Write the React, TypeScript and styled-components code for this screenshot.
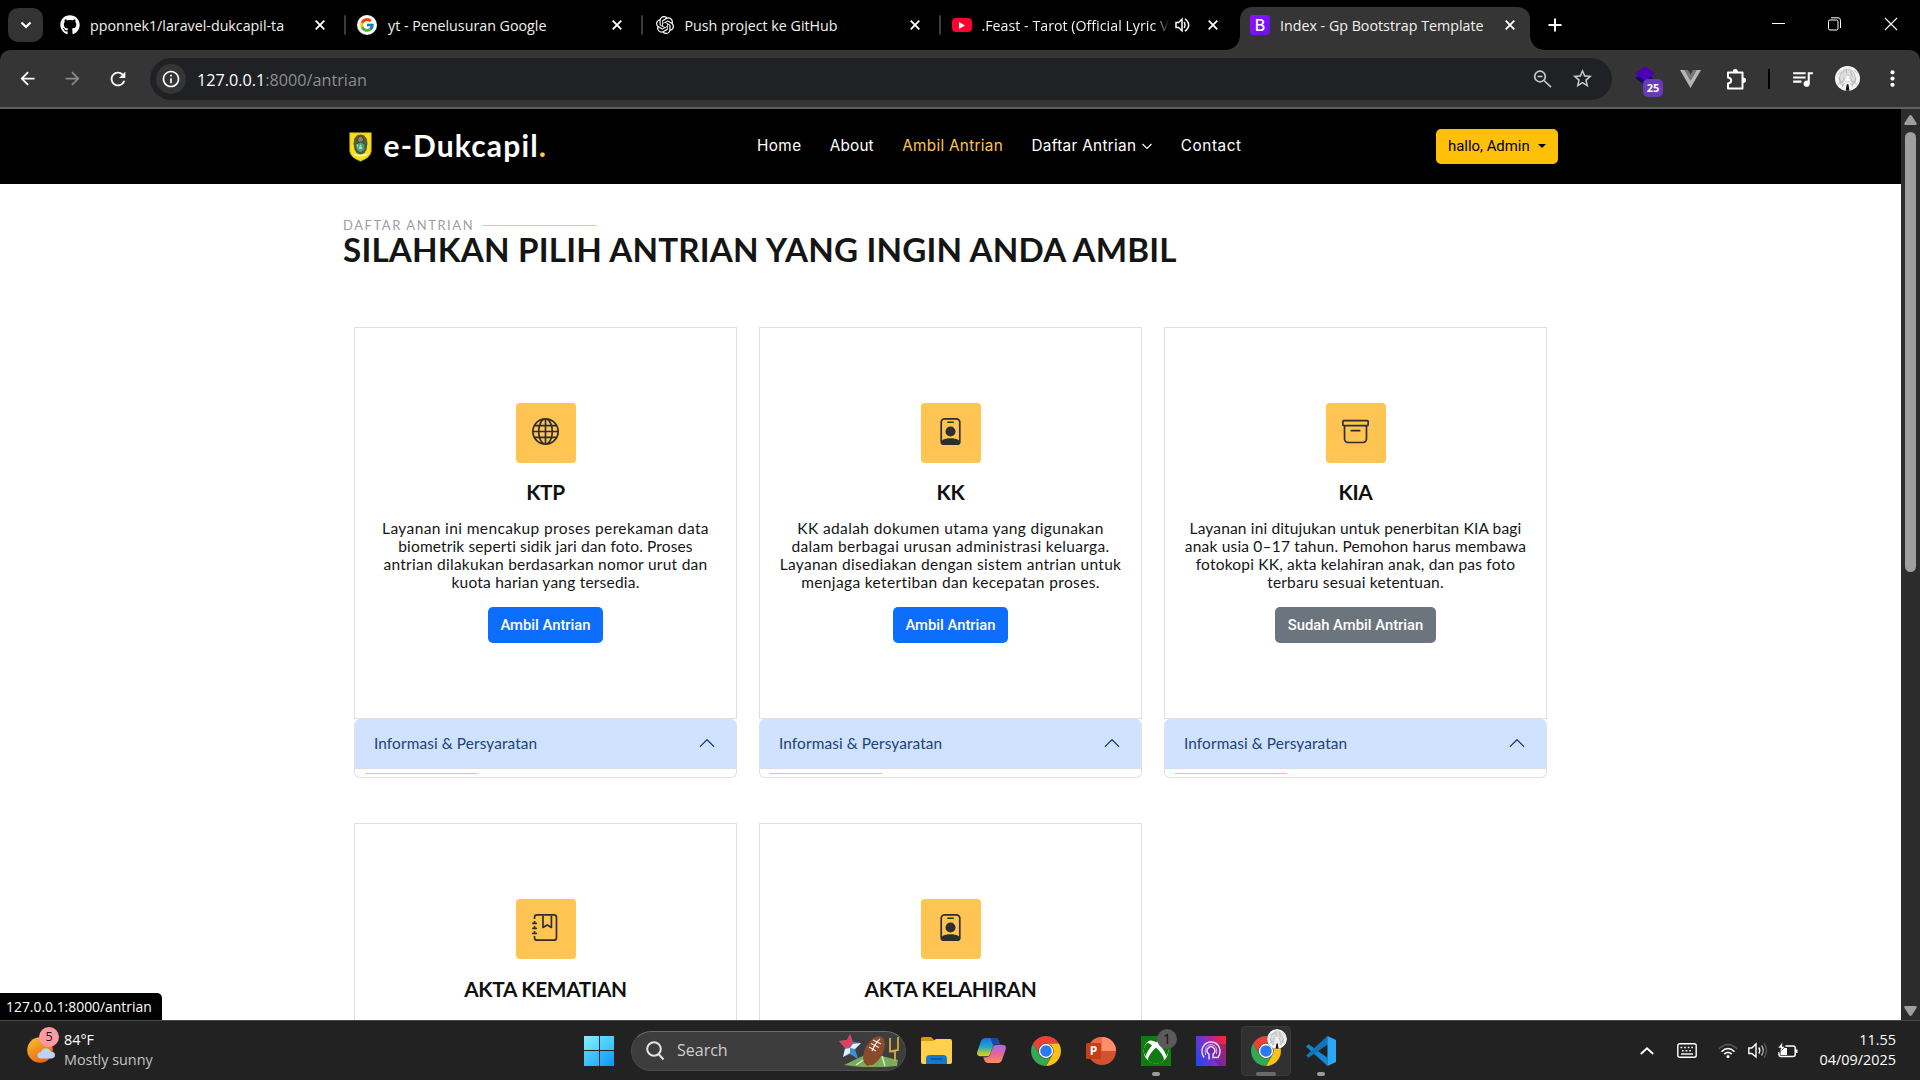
import React from "react";
import styled, { createGlobalStyle, css } from "styled-components";
import { BsGlobe, BsPersonBadge, BsArchive, BsJournalBookmark, BsChevronUp } from "react-icons/bs";
import { FaGithub } from "react-icons/fa";
import { FcGoogle } from "react-icons/fc";
import { SiOpenai } from "react-icons/si";
import { MdArrowBack, MdArrowForward, MdRefresh, MdInfoOutline, MdStarBorder, MdMoreVert, MdQueueMusic } from "react-icons/md";

const ui = `"Open Sans", "Noto Sans", sans-serif`;
const display = `Lato, "Open Sans", sans-serif`;

const GlobalStyle = createGlobalStyle`
  * { box-sizing: border-box; }
  body { margin: 0; background: #000; overflow: hidden; font-family: ${ui}; }
  svg { display: block; flex: none; }
`;

const Screen = styled.div`
  width: 1920px;
  height: 1080px;
  display: flex;
  flex-direction: column;
  overflow: hidden;
`;

/* ---------- tab strip ---------- */
const TabStrip = styled.div`
  height: 50px;
  background: #000;
  display: flex;
  padding-left: 8px;
  color: #fff;
`;
const TabSearch = styled.div`
  width: 35px;
  height: 34px;
  margin-top: 8px;
  border-radius: 10px;
  background: #333;
  display: grid;
  place-items: center;
`;
const Tab = styled.div<{ $active?: boolean; $width: number; $start: number; $end: number }>`
  position: relative;
  width: ${(p) => p.$width}px;
  height: ${(p) => (p.$active ? 43 : 36)}px;
  margin-top: 7px;
  display: flex;
  align-items: center;
  padding: 0 ${(p) => p.$end}px 0 ${(p) => p.$start}px;
  ${(p) =>
    p.$active &&
    css`
      background: #353535;
      border-radius: 12px 12px 0 0;
      padding-bottom: 7px;
      &::before, &::after {
        content: "";
        position: absolute;
        bottom: 0;
        width: 14px;
        height: 14px;
      }
      &::before { left: -14px; background: radial-gradient(circle at 0 0, transparent 13.5px, #353535 14px); }
      &::after { right: -14px; background: radial-gradient(circle at 100% 0, transparent 13.5px, #353535 14px); }
    `}
`;
const TabIcon = styled.span`
  width: 20px;
  display: grid;
  place-items: center;
`;
const TabTitle = styled.span<{ $gap: number; $fade?: boolean }>`
  margin-left: ${(p) => p.$gap}px;
  padding-top: 1px;
  flex: 1;
  min-width: 0;
  white-space: nowrap;
  font-size: 14.25px;
  line-height: 24px;
  color: #f1f1f1;
  ${(p) => p.$fade && css`mask-image: linear-gradient(90deg, #000 172px, transparent 188px);`}
`;
const SoundSlot = styled.span`
  margin-right: 18px;
  display: flex;
`;
const TabDivider = styled.i`
  width: 2px;
  height: 20px;
  margin-top: 15px;
  border-radius: 1px;
  background: #3a3a3a;
`;
const NewTab = styled.div`
  margin: 18px 0 0 18px;
`;
const WindowButtons = styled.div`
  margin: 17px 22px 0 auto;
  display: flex;
  gap: 43px;
`;
const YoutubeMark = styled.span`
  width: 20px;
  height: 14px;
  border-radius: 4px;
  background: #ff0033;
  display: grid;
  place-items: center;
`;
const BootstrapMark = styled.span`
  width: 20px;
  height: 20px;
  border-radius: 3px;
  background: linear-gradient(135deg, #9013fe, #6610f2);
  color: #fff;
  font: 500 16px/20px Inter, sans-serif;
  text-align: center;
`;

/* ---------- toolbar ---------- */
const ToolbarWrap = styled.div`
  background: linear-gradient(#000 20px, #353535 20px);
`;
const Toolbar = styled.div`
  height: 59px;
  background: #353535;
  border-bottom: 2px solid #606060;
  border-radius: 10px 10px 0 0;
  display: flex;
  align-items: center;
  padding-left: 17px;
  color: #fff;
`;
const NavIcons = styled.div`
  width: 133px;
  display: flex;
  gap: 24px;
  svg:nth-child(2) { color: #8a8a8a; }
`;
const Omnibox = styled.div`
  width: 1462px;
  height: 42px;
  border-radius: 21px;
  background: #202124;
  display: flex;
  align-items: center;
  padding: 0 18px 0 6px;
`;
const SiteInfo = styled.span`
  width: 30px;
  height: 30px;
  border-radius: 50%;
  background: #353535;
  display: grid;
  place-items: center;
`;
const Url = styled.span`
  margin-left: 11px;
  padding-top: 2px;
  font-size: 16.2px;
  color: #8d8e90;
  flex: 1;
  b { font-weight: 400; color: #fff; }
`;
const OmniIcons = styled.span`
  display: flex;
  align-items: center;
  gap: 19px;
  color: #c8c8c8;
`;
const Extensions = styled.div`
  flex: 1;
  height: 57px;
  display: flex;
  align-items: center;
  padding-left: 23px;
`;
const LayersExtension = styled.div`
  position: relative;
  width: 28px;
  height: 30px;
`;
const CountBadge = styled.span`
  position: absolute;
  left: 8px;
  top: 15px;
  width: 20px;
  height: 18px;
  border-radius: 5px;
  background: #673ab7;
  color: #fff;
  font: 700 11px/18px "Open Sans", sans-serif;
  text-align: center;
`;
const Slot = styled.span<{ $left: number }>`
  margin-left: ${(p) => p.$left}px;
  display: flex;
`;
const ToolDivider = styled.i`
  margin-left: 21px;
  width: 2px;
  height: 20px;
  background: #000;
`;

/* ---------- page ---------- */
const Viewport = styled.div`
  height: 911px;
  display: flex;
  position: relative;
  background: #fff;
`;
const Page = styled.div`
  width: 1901px;
  height: 911px;
  overflow: hidden;
`;
const Header = styled.header`
  height: 75px;
  background: #000;
  display: flex;
  align-items: center;
  padding-left: 348.5px;
`;
const Brand = styled.div`
  width: 408.5px;
  display: flex;
  align-items: center;
  gap: 12px;
  color: #fff;
  font: 700 30px/36px ${display};
  letter-spacing: 1.15px;
  span { padding-bottom: 3px; }
  i { font-style: normal; color: #ffc451; }
`;
const Menu = styled.nav`
  width: 679px;
  display: flex;
  gap: 28.4px;
  padding-bottom: 1px;
`;
const MenuItem = styled.a<{ $active?: boolean; $track: number }>`
  display: flex;
  align-items: center;
  gap: 6px;
  white-space: nowrap;
  font: 400 15.3px/24px Inter, sans-serif;
  letter-spacing: ${(p) => p.$track}px;
  color: ${(p) => (p.$active ? "#ffc451" : "#fff")};
`;
const UserButton = styled.button`
  width: 122px;
  height: 35px;
  border: 0;
  border-radius: 5px;
  background: #ffc107;
  padding: 0 0 1px 12px;
  display: flex;
  align-items: center;
  gap: 8px;
  font: 400 14.9px/22px Roboto, sans-serif;
  color: #000;
`;
const Caret = styled.i`
  border: 4px solid transparent;
  border-top-color: #000;
  border-bottom: 0;
`;
const Heading = styled.section`
  padding: 34px 0 0 343px;
`;
const Eyebrow = styled.div`
  height: 15px;
  display: flex;
  align-items: center;
  gap: 9px;
  font: 400 13px/15px ${display};
  letter-spacing: 1.56px;
  color: #a0a0a0;
  &::after { content: ""; width: 113px; height: 1px; background: #ffc451; }
`;
const Title = styled.h1`
  margin: -2px 0 2px;
  font: 700 33.2px/36px ${display};
  letter-spacing: 0.19px;
  color: #151515;
`;
const CardGrid = styled.section`
  display: grid;
  grid-template-columns: repeat(3, 383px);
  column-gap: 22px;
  row-gap: 45.4px;
  padding: 58px 0 0 354px;
`;
const ServiceCard = styled.article`
  height: 392px;
  border: 1px solid #e0e0e1;
  display: flex;
  flex-direction: column;
  align-items: center;
  padding-top: 75px;
`;
const IconTile = styled.div`
  width: 60px;
  height: 60px;
  border-radius: 4px;
  background: #ffc451;
  color: #2e2e2e;
  display: flex;
  justify-content: center;
  padding-top: 15px;
`;
const CardTitle = styled.h2`
  margin: 15.2px 0 0;
  height: 28px;
  font: 700 20.8px/28px ${display};
  letter-spacing: -0.3px;
  color: #111;
`;
const CardText = styled.p`
  margin: 12.8px 0 0;
  text-align: center;
  font: 400 15.5px/18px ${display};
  color: #151515;
`;
const Line = styled.span<{ $track: number }>`
  display: block;
  white-space: nowrap;
  letter-spacing: ${(p) => p.$track}px;
`;
const CardButton = styled.button<{ $done?: boolean }>`
  margin-top: 16px;
  width: ${(p) => (p.$done ? 161 : 115)}px;
  height: 36px;
  border: 0;
  border-radius: 5px;
  padding: 0;
  background: ${(p) => (p.$done ? "#6c757d" : "#0d6efd")};
  color: #fff;
  font: 500 14.8px/22px Roboto, sans-serif;
`;
const Accordion = styled.div`
  height: 59px;
  border: 1px solid #dee2e6;
  border-top: 0;
  border-radius: 6px;
  overflow: hidden;
`;
const AccordionHead = styled.div`
  height: 50px;
  background: #cfe2ff;
  border-bottom: 1px solid #d5dfea;
  color: #052c65;
  padding: 0 20px 1px 19px;
  display: flex;
  align-items: center;
  justify-content: space-between;
  font: 400 15.4px/20px ${display};
  letter-spacing: 0.1px;
  span { color: #1e4273; }
`;
const AccentRule = styled.div`
  width: 112px;
  height: 1px;
  margin: 4px 0 0 10px;
  background: #ffc451;
`;
const Scrollbar = styled.div`
  width: 19px;
  background: #2c2c2c;
  display: flex;
  flex-direction: column;
  align-items: center;
  padding: 6px 0 4px;
`;
const ScrollThumb = styled.div`
  width: 11px;
  height: 440px;
  margin: 7px 0 auto;
  border-radius: 6px;
  background: #9f9f9f;
`;
const StatusBubble = styled.div`
  position: absolute;
  left: 0;
  bottom: 0;
  width: 162px;
  height: 27px;
  border-radius: 0 5px 0 0;
  background: #000;
  color: #fff;
  padding-left: 6px;
  font: 400 13.9px/27px ${ui};
`;

/* ---------- taskbar ---------- */
const Taskbar = styled.footer`
  height: 60px;
  background: #222;
  border-top: 1px solid #484848;
  display: flex;
  align-items: center;
  color: #fff;
`;
const Weather = styled.div`
  width: 584px;
  padding-left: 27px;
  display: flex;
  align-items: center;
`;
const WeatherIcon = styled.div`
  position: relative;
  width: 37px;
  height: 44px;
  padding-top: 8px;
`;
const WeatherCount = styled.span`
  position: absolute;
  left: 12px;
  top: -2px;
  width: 20px;
  height: 20px;
  border-radius: 50%;
  background: #ff99a4;
  color: #111;
  font: 400 12.5px/20px ${ui};
  text-align: center;
`;
const TwoLines = styled.div<{ $right?: boolean }>`
  font-size: 14.4px;
  line-height: 20px;
  padding-bottom: 2px;
  white-space: nowrap;
  text-align: ${(p) => (p.$right ? "right" : "left")};
  small { display: block; font-size: inherit; color: ${(p) => (p.$right ? "#fff" : "#c4c4c4")}; }
`;
const StartLogo = styled.div`
  width: 30px;
  height: 30px;
  display: grid;
  grid-template-columns: 1fr 1fr;
  gap: 1px;
  i:nth-child(1) { background: linear-gradient(135deg, #7ff0fd, #55d2fb); }
  i:nth-child(2) { background: linear-gradient(135deg, #5fdcfc, #37bffa); }
  i:nth-child(3) { background: linear-gradient(135deg, #4fd0fb, #29b0fa); }
  i:nth-child(4) { background: linear-gradient(135deg, #35b9fa, #0f97fb); }
`;
const SearchBox = styled.div`
  margin-left: 17px;
  width: 275px;
  height: 40px;
  border-radius: 20px;
  background: #3d3d3d;
  border: 1px solid #4b4b4b;
  border-top-color: #6a6a6a;
  display: flex;
  align-items: center;
  padding: 0 5px 0 13px;
  font-size: 16px;
  color: #cfcfcf;
  span { flex: 1; margin-left: 12px; padding-bottom: 1px; }
`;
const Apps = styled.div`
  margin-left: 5px;
  display: flex;
  gap: 5px;
`;
const AppSlot = styled.div<{ $active?: boolean; $running?: boolean }>`
  position: relative;
  width: 50px;
  height: 50px;
  border-radius: 5px;
  display: grid;
  place-items: center;
  ${(p) => p.$active && css`background: #303030; box-shadow: inset 0 0 0 1px #3b3b3b;`}
  ${(p) =>
    (p.$active || p.$running) &&
    css`
      &::after {
        content: "";
        position: absolute;
        bottom: 0;
        left: 50%;
        width: ${p.$active ? 20 : 8}px;
        height: 4px;
        border-radius: 2px;
        background: ${p.$active ? "#6a6a6a" : "#9a9a9a"};
        transform: translateX(-50%);
      }
    `}
`;
const AppBadge = styled.span`
  position: absolute;
  right: 4px;
  top: 3px;
  width: 20px;
  height: 20px;
  border-radius: 50%;
  overflow: hidden;
  background: #5a5a5a;
  color: #111;
  font: 400 14px/20px ${ui};
  text-align: center;
`;
const Tray = styled.div`
  margin-left: auto;
  padding-right: 24px;
  display: flex;
  align-items: center;
`;
const Clock = styled.div`
  width: 97px;
`;

const Cross = ({ size = 10, w = 1.8 }: { size?: number; w?: number }) => (
  <svg width={size} height={size} viewBox="0 0 10 10" stroke="#fff" strokeWidth={w} fill="none">
    <path d="M.7.7l8.6 8.6M9.3.7L.7 9.3" />
  </svg>
);

const Chrome = () => (
  <svg width="30" height="30" viewBox="2 2 44 44">
    <path fill="#ea4335" d="M24 13H43.05A22 22 0 0 0 4.95 13L14.47 29.5A11 11 0 0 1 24 13Z" />
    <path fill="#fbc116" d="M43.05 13A22 22 0 0 1 24 46L33.53 29.5A11 11 0 0 0 24 13Z" />
    <path fill="#34a853" d="M24 46A22 22 0 0 1 4.95 13L14.47 29.5A11 11 0 0 0 33.53 29.5Z" />
    <circle cx="24" cy="24" r="10.5" fill="#fff" />
    <circle cx="24" cy="24" r="8.5" fill="#2979f2" />
  </svg>
);

const Avatar = ({ size }: { size: number }) => (
  <svg width={size} height={size} viewBox="0 0 26 26">
    <circle cx="13" cy="13" r="13" fill="#f4f4f4" />
    <path d="M5 17q-1-9 3-12 5-4 10 0 4 4 3 12l-3 3-1-7-4-3-4 3-1 8z" fill="#dedede" stroke="#9a9a9a" strokeWidth=".5" />
    <path d="M9.500 11q3.500-3 7 0l-.6 4.500q-2.900 3-5.800 0z" fill="#fafafa" stroke="#888" strokeWidth=".4" />
    <path d="M7 8l4-4M12 4v4M16 5l2 6M3 19l5-3M23 19l-5-3M4 12l2 5M22 12l-2 5M10.500 12.500h1.500M14 12.500h1.500M7 22l3-4M19 22l-3-4M3 9l3-3M20 4l3 4" stroke="#8c8c8c" strokeWidth=".5" fill="none" />
    <path d="M12.200 19h1.800l1 6.800h-3.800z" fill="#111" />
  </svg>
);

const Crest = () => (
  <svg width="23" height="30" viewBox="0 0 23 30">
    <path d="M.7.7h21.6V19q-.6 6.5-10.8 10.3Q1.300 25.500.7 19Z" fill="#f8df1b" stroke="#a59724" strokeWidth=".7" />
    <path d="M11.500 2.500l3.500.8 2.700 3.200.8 5-1 6-2 3.500-4 2-4-2-2-3.500-1-6 .8-5L8 3.300Z" fill="#565f38" />
    <path d="M8.300 8l1-3 2.200-1 2.200 1 1 3-1.500 2.500h-3.400Z" fill="#8a8352" stroke="#2d3527" strokeWidth=".8" />
    <path d="M7 12l4.500-2 4.500 2v6l-4.500 3L7 18Z" fill="#4a9e91" stroke="#2b4538" strokeWidth=".8" />
    <path d="M9.500 17l2-5 2 5ZM7.500 12l2 1-1.500 3Z" fill="#c5d982" />
    <path d="M5 22.500q6.500 2 13 0" stroke="#f7f3da" strokeWidth="1.800" fill="none" />
  </svg>
);

const Football = () => (
  <svg width="61" height="33" viewBox="0 0 61 33">
    <path d="M5 31L30 19l29 7-1 6q-28 3-53-1Z" fill="#79ad5c" />
    <path d="M17 31l13-9M31 32l5-11M46 32l-3-10" stroke="#d7e8c5" strokeWidth="1.500" />
    <path d="M11 0l3 8 8 1-6 6 3 10-8-5-7 3 2-9-6-7 8-1Z" fill="#3f8fd2" />
    <path d="M11 0l3 8-3 5-5 1-6-7 8-1Z" fill="#e0405c" />
    <path d="M22 9l-8 1-3 4 5 1ZM4 23l7-4v-5l-5 1Z" fill="#e9eef7" />
    <path d="M56 27V17l-5 .5V4M51 17.500l8-1.500V3" stroke="#d6ac3b" strokeWidth="1.800" fill="none" />
    <ellipse cx="35" cy="17" rx="9" ry="16" transform="rotate(28 35 17)" fill="#8a4b2c" />
    <path d="M41 5q-4 3-8 12M34 6l8 4M32 9.500l8 4M30 13l7 4" stroke="#f3e6db" strokeWidth="1.300" fill="none" />
  </svg>
);

const Folder = () => (
  <svg width="31" height="27" viewBox="0 0 31 27">
    <path d="M0 2q0-2 2-2h8l4 4H0Z" fill="#d99a06" />
    <path d="M0 4h12l3-2h14q2 0 2 2v21q0 2-2 2H2q-2 0-2-2Z" fill="#ffd04a" />
    <path d="M5 27v-5q0-4 4-4h13q4 0 4 4v5Z" fill="#1478ce" />
    <path d="M10 22h11" stroke="#0b4f96" strokeWidth="1.500" />
  </svg>
);

const Copilot = () => (
  <svg width="29" height="27" viewBox="0 0 30 28">
    <defs>
      <linearGradient id="cpA" x1="0" y1="0" x2="0" y2="1"><stop stopColor="#1d6fe0" /><stop offset=".5" stopColor="#23a8c9" /><stop offset=".8" stopColor="#a5ca3d" /><stop offset="1" stopColor="#f2c51d" /></linearGradient>
      <linearGradient id="cpB" x1="0" y1="0" x2="0" y2="1"><stop stopColor="#9d6cf0" /><stop offset=".5" stopColor="#e9619c" /><stop offset="1" stopColor="#fb9254" /></linearGradient>
    </defs>
    <path d="M9 1h10q2.500 0 3.400 3L23.500 7h-4q-2.500 0-3.300 3l-2.300 7q-1 3-4 3H4q-5 0-3.700-5L4 4.500Q5.200 1 9 1Z" fill="url(#cpA)" />
    <path d="M21 27H11q-2.500 0-3.400-3L6.500 21h4q2.500 0 3.300-3l2.300-7q1-3 4-3H26q5 0 3.700 5L26 23.500Q24.800 27 21 27Z" fill="url(#cpB)" />
    <path d="M14 1h5q2.500 0 3.400 3l1.100 3h-4q-2 0-3 1.500Z" fill="#1746b5" />
  </svg>
);

const PowerPoint = () => (
  <svg width="30" height="28" viewBox="0 0 30 28">
    <circle cx="16" cy="14" r="14" fill="#d35230" />
    <path d="M16 0a14 14 0 0 1 14 14H16Z" fill="#ff8f6b" />
    <path d="M16 0v14H2A14 14 0 0 1 16 0Z" fill="#ed6c47" />
    <rect y="6" width="15" height="16" rx="1.500" fill="#c43e1c" />
    <text x="7.500" y="18.300" fill="#fff" fontFamily="Open Sans" fontWeight="700" fontSize="12" textAnchor="middle">P</text>
  </svg>
);

const Xbox = () => (
  <svg width="30" height="30" viewBox="0 0 30 30">
    <rect width="30" height="30" fill="#107c10" />
    <circle cx="15" cy="15" r="12.300" fill="#fff" />
    <path d="M8 4.800q3-1 7 1.500 4-2.500 7-1.500-3-2.800-7-2.800T8 4.800ZM15 11.500q-7 6.500-8.300 12.500Q10 27.500 15 27.500t8.300-3.500Q22 18 15 11.500ZM6.200 6.800q2 0 4.800 2.700-5.500 6-6.300 11Q0 13 6.200 6.800ZM23.800 6.800q-2 0-4.800 2.700 5.500 6 6.300 11Q30 13 23.800 6.800Z" fill="#107c10" />
  </svg>
);

const HeadApp = () => (
  <svg width="30" height="30" viewBox="0 0 30 30">
    <defs>
      <linearGradient id="headBg" x1="0" y1=".7" x2="1" y2=".2"><stop stopColor="#2b45f0" /><stop offset=".5" stopColor="#8a2fc0" /><stop offset="1" stopColor="#ff2430" /></linearGradient>
    </defs>
    <rect width="30" height="30" fill="url(#headBg)" />
    <path d="M11 15L23 30H30V8L21 8Z" fill="#3a1d8a" opacity=".35" />
    <path d="M8 21.500Q5 17 6.500 12 9 6 15 6t8.500 6q1.500 5-1.500 9.500h-5v-3.500q3-2 1.500-5-1.500-2.500-3.500-2.500T11.500 13q-1.500 3 1.500 5v5.500" fill="none" stroke="#eadcff" strokeWidth="1.500" />
    <path d="M9.500 19Q8 9 15 8.500 22 9 20.500 18" fill="none" stroke="#eadcff" strokeWidth=".8" />
  </svg>
);

const VsCode = () => (
  <svg width="30" height="30" viewBox="0 0 30 30">
    <path d="M2.500 8.300L0 10.500 21.500 30V21.800Z" fill="#1486d2" />
    <path d="M21.500 0L0 19.500 2.500 21.800 22 8.200Z" fill="#0f74bd" />
    <path d="M21.500 0L30 4v22l-8.500 4Z" fill="#2aa7f5" />
  </svg>
);

type ServiceData = { title: string; Icon: React.ComponentType<{ size?: number }>; lines: [string, number][]; done?: boolean };
const services: ServiceData[] = [
  {
    title: "KTP",
    Icon: BsGlobe,
    lines: [
      ["Layanan ini mencakup proses perekaman data", 0.38],
      ["biometrik seperti sidik jari dan foto. Proses", 0.13],
      ["antrian dilakukan berdasarkan nomor urut dan", 0.26],
      ["kuota harian yang tersedia.", 0.22],
    ],
  },
  {
    title: "KK",
    Icon: BsPersonBadge,
    lines: [
      ["KK adalah dokumen utama yang digunakan", 0.38],
      ["dalam berbagai urusan administrasi keluarga.", 0.36],
      ["Layanan disediakan dengan sistem antrian untuk", 0.3],
      ["menjaga ketertiban dan kecepatan proses.", 0.36],
    ],
  },
  {
    title: "KIA",
    Icon: BsArchive,
    done: true,
    lines: [
      ["Layanan ini ditujukan untuk penerbitan KIA bagi", 0.15],
      ["anak usia 0–17 tahun. Pemohon harus membawa", 0.19],
      ["fotokopi KK, akta kelahiran anak, dan pas foto", 0.2],
      ["terbaru sesuai ketentuan.", 0.2],
    ],
  },
  { title: "AKTA KEMATIAN", Icon: BsJournalBookmark, lines: [] },
  { title: "AKTA KELAHIRAN", Icon: BsPersonBadge, lines: [] },
];

const Service = ({ title, Icon, lines, done }: ServiceData) => (
  <div>
    <ServiceCard>
      <IconTile><Icon size={27} /></IconTile>
      <CardTitle>{title}</CardTitle>
      {lines.length > 0 && (
        <>
          <CardText>
            {lines.map(([text, track]) => (
              <Line key={text} $track={track}>{text}</Line>
            ))}
          </CardText>
          <CardButton $done={done}>{done ? "Sudah Ambil Antrian" : "Ambil Antrian"}</CardButton>
        </>
      )}
    </ServiceCard>
    {lines.length > 0 && (
      <Accordion>
        <AccordionHead>
          <span>Informasi &amp; Persyaratan</span>
          <BsChevronUp size={18} />
        </AccordionHead>
        <AccentRule />
      </Accordion>
    )}
  </div>
);

export default function App() {
  return (
    <Screen>
      <GlobalStyle />
      <TabStrip>
        <TabSearch>
          <svg width="12" height="8" viewBox="0 0 12 8" fill="none" stroke="#fff" strokeWidth="2.200"><path d="M1.500 1.500L6 6l4.500-4.500" /></svg>
        </TabSearch>
        <Tab $width={301} $start={17} $end={19}>
          <TabIcon><FaGithub size={20} /></TabIcon>
          <TabTitle $gap={10}>pponnek1/laravel-dukcapil-ta</TabTitle>
          <Cross />
        </Tab>
        <TabDivider />
        <Tab $width={295} $start={11} $end={19}>
          <TabIcon><svg width="20" height="20"><circle cx="10" cy="10" r="10" fill="#fff" /><FcGoogle x={2} y={2} size={16} /></svg></TabIcon>
          <TabTitle $gap={11}>yt - Penelusuran Google</TabTitle>
          <Cross />
        </Tab>
        <TabDivider />
        <Tab $width={296} $start={12} $end={19}>
          <TabIcon><SiOpenai size={18} /></TabIcon>
          <TabTitle $gap={9.5}>Push project ke GitHub</TabTitle>
          <Cross />
        </Tab>
        <TabDivider />
        <Tab $width={292} $start={11} $end={15}>
          <TabIcon>
            <YoutubeMark><svg width="6" height="7" viewBox="0 0 6 7"><path d="M0 0l6 3.500L0 7Z" fill="#fff" /></svg></YoutubeMark>
          </TabIcon>
          <TabTitle $gap={9.5} $fade>.Feast - Tarot (Official Lyric V</TabTitle>
          <SoundSlot>
            <svg width="15" height="16" viewBox="0 0 15 16" fill="none" stroke="#fff" strokeWidth="1.500">
              <path d="M1 5.500h2.500L7 2.200v11.600L3.500 10.500H1ZM9.300 5q1.500 3 0 6M10 1.700q7.500 6.300 0 12.600" />
            </svg>
          </SoundSlot>
          <Cross />
        </Tab>
        <Slot $left={7} />
        <Tab $active $width={290} $start={10} $end={15}>
          <TabIcon><BootstrapMark>B</BootstrapMark></TabIcon>
          <TabTitle $gap={10}>Index - Gp Bootstrap Template</TabTitle>
          <Cross />
        </Tab>
        <NewTab>
          <svg width="14" height="14" viewBox="0 0 14 14" stroke="#fff" strokeWidth="2"><path d="M7 .5v13M.5 7h13" /></svg>
        </NewTab>
        <WindowButtons>
          <svg width="13" height="14" stroke="#fff"><path d="M0 6.500h13" /></svg>
          <svg width="13" height="14" viewBox="0 0 13 14" fill="none" stroke="#fff"><rect x=".5" y="3" width="9.500" height="10" rx="1.500" /><path d="M3 .8h7q2.500 0 2.500 2.500V11" /></svg>
          <Cross size={14} w={0.8} />
        </WindowButtons>
      </TabStrip>

      <ToolbarWrap>
        <Toolbar>
          <NavIcons>
            <MdArrowBack size={21} />
            <MdArrowForward size={21} />
            <MdRefresh size={22} />
          </NavIcons>
          <Omnibox>
            <SiteInfo><MdInfoOutline size={20} /></SiteInfo>
            <Url><b>127.0.0.1</b>:8000/antrian</Url>
            <OmniIcons>
              <svg width="19" height="18" viewBox="0 0 19 18" fill="none" stroke="currentColor" strokeWidth="1.700"><circle cx="7" cy="6.500" r="5.300" /><path d="M4.500 6.500h5M11 10.500l7 6.700" /></svg>
              <MdStarBorder size={23} />
            </OmniIcons>
          </Omnibox>
          <Extensions>
            <LayersExtension>
              <svg width="20" height="22" viewBox="0 0 20 22"><path d="M0 14l9-5 10 6-9 6Z" fill="#210070" /><path d="M0 9.500L10 2l10 7.500L10 17Z" fill="#4b00b5" /></svg>
              <CountBadge>25</CountBadge>
            </LayersExtension>
            <Slot $left={17}>
              <svg width="21" height="18" viewBox="0 0 21 18"><path d="M0 0h4.500l6 10.500 6-10.500H21L10.500 18Z" fill="#b5b5b5" /><path d="M4.500 0H8l2.500 4.500L13 0h3.500l-6 10.500Z" fill="#777" /></svg>
            </Slot>
            <Slot $left={25}>
              <svg width="21" height="22" viewBox="0 0 21 22" fill="none" stroke="#fff" strokeWidth="2" strokeLinejoin="round">
                <path d="M2 4.500H16.500V20.500H2V15.500q3.200-.5 3.200-3T2 9.500Z" />
                <path d="M6.700 4q0-3 2.600-3t2.600 3ZM17 9.500q3 0 3 2.700t-3 2.700Z" fill="#fff" stroke="none" />
              </svg>
            </Slot>
            <ToolDivider />
            <Slot $left={20}><MdQueueMusic size={25} /></Slot>
            <Slot $left={20}><Avatar size={25} /></Slot>
            <Slot $left={20}><MdMoreVert size={25} /></Slot>
          </Extensions>
        </Toolbar>
      </ToolbarWrap>

      <Viewport>
        <Page>
          <Header>
            <Brand>
              <Crest />
              <span>e-Dukcapil<i>.</i></span>
            </Brand>
            <Menu>
              <MenuItem $track={0.4}>Home</MenuItem>
              <MenuItem $track={0.15}>About</MenuItem>
              <MenuItem $active $track={0.3}>Ambil Antrian</MenuItem>
              <MenuItem $track={0.32}>
                Daftar Antrian
                <svg width="10" height="7" viewBox="0 0 10 7" fill="none" stroke="#fff" strokeWidth="1.100"><path d="M.5 1L5 5.500 9.500 1" /></svg>
              </MenuItem>
              <MenuItem $track={0.6}>Contact</MenuItem>
            </Menu>
            <UserButton>hallo, Admin <Caret /></UserButton>
          </Header>
          <Heading>
            <Eyebrow>DAFTAR ANTRIAN</Eyebrow>
            <Title>SILAHKAN PILIH ANTRIAN YANG INGIN ANDA AMBIL</Title>
          </Heading>
          <CardGrid>
            {services.map((s) => <Service key={s.title} {...s} />)}
          </CardGrid>
        </Page>
        <Scrollbar>
          <svg width="13" height="10" viewBox="0 0 13 10"><path d="M6.500 0Q7.200 0 8 1l4.500 7q.8 2-1 2H1.500q-1.800 0-1-2L5 1Q5.800 0 6.500 0Z" fill="#9f9f9f" /></svg>
          <ScrollThumb />
          <svg width="13" height="10" viewBox="0 0 13 10"><path d="M6.500 10Q5.800 10 5 9L.5 2q-.8-2 1-2h10q1.800 0 1 2L8 9q-.8 1-1.500 1Z" fill="#9f9f9f" /></svg>
        </Scrollbar>
        <StatusBubble>127.0.0.1:8000/antrian</StatusBubble>
      </Viewport>

      <Taskbar>
        <Weather>
          <WeatherIcon>
            <svg width="29" height="28" viewBox="0 0 29 28">
              <defs><linearGradient id="sun" x1="0" y1="0" x2=".6" y2="1"><stop stopColor="#f7c433" /><stop offset="1" stopColor="#ee6410" /></linearGradient></defs>
              <circle cx="13" cy="13" r="12.800" fill="url(#sun)" />
              <path d="M14 21.500q-3.500 0-3.500-3.200 0-3 3.500-3 1-4 5-4 3.500 0 4.700 3.500 4.300 0 4.300 3.300 0 3.400-4 3.400Z" fill="#bcd3f5" />
            </svg>
            <WeatherCount>5</WeatherCount>
          </WeatherIcon>
          <TwoLines>84°F<small>Mostly sunny</small></TwoLines>
        </Weather>
        <StartLogo><i /><i /><i /><i /></StartLogo>
        <SearchBox>
          <svg width="20" height="20" viewBox="0 0 20 20" fill="none" stroke="#e4e4e4" strokeWidth="2"><circle cx="9" cy="8" r="6.800" /><path d="M13.500 13l5 5.500" /></svg>
          <span>Search</span>
          <Football />
        </SearchBox>
        <Apps>
          <AppSlot><Folder /></AppSlot>
          <AppSlot><Copilot /></AppSlot>
          <AppSlot><Chrome /></AppSlot>
          <AppSlot><PowerPoint /></AppSlot>
          <AppSlot $running><Xbox /><AppBadge>1</AppBadge></AppSlot>
          <AppSlot><HeadApp /></AppSlot>
          <AppSlot $active><Chrome /><AppBadge><Avatar size={20} /></AppBadge></AppSlot>
          <AppSlot $running><VsCode /></AppSlot>
        </Apps>
        <Tray>
          <svg width="14" height="8" viewBox="0 0 14 8" fill="none" stroke="#fff" strokeWidth="1.800"><path d="M.8 7L7 1.300 13.200 7" /></svg>
          <Slot $left={23}>
            <svg width="20" height="15" viewBox="0 0 20 15" fill="none" stroke="#fff" strokeWidth="1.400">
              <rect x=".8" y=".8" width="18.400" height="13.400" rx="1.800" />
              <path d="M4 11h12" />
              <path d="M3.500 4.500h13M5 7.700h10" strokeDasharray="1.700 1.900" />
            </svg>
          </Slot>
          <Slot $left={21}>
            <svg width="20" height="16" viewBox="0 0 20 16" fill="none" stroke="#fff" strokeWidth="1.600">
              <path d="M.8 6q9.200-9 18.400 0" stroke="#5a5a5a" />
              <path d="M3.500 8.700q6.500-6.400 13 0M6.300 11.200q3.700-3.500 7.400 0" />
              <circle cx="10" cy="13.500" r="1.500" fill="#fff" stroke="none" />
            </svg>
          </Slot>
          <Slot $left={10}>
            <svg width="20" height="17" viewBox="0 0 20 17" fill="none" stroke="#fff" strokeWidth="1.400">
              <path d="M.8 6h3L8 2v13L3.800 11.500h-3ZM10.800 5.500q2 3 0 6" />
              <path d="M13.500 3.500q3.500 5 0 10" stroke="#aaa" />
              <path d="M16 1.200q5 7.300 0 14.600" stroke="#555" />
            </svg>
          </Slot>
          <Slot $left={10}>
            <svg width="21" height="17" viewBox="0 0 21 17" fill="none" stroke="#fff" strokeWidth="1.500">
              <path d="M7.500 4H15q2.200 0 2.200 2v6.500q0 2-2.200 2H3q-2 0-2-2V10" />
              <path d="M18.500 7.500v3.500" strokeWidth="2" />
              <path d="M9 6v7H2.500v-4L6 6Z" fill="#fff" stroke="none" />
              <path d="M4.500 0L0 6h3L1.500 11 7 4.500H4.200Z" fill="#fff" stroke="#222" strokeWidth=".5" />
            </svg>
          </Slot>
          <Clock><TwoLines $right>11.55<small>04/09/2025</small></TwoLines></Clock>
        </Tray>
      </Taskbar>
    </Screen>
  );
}
